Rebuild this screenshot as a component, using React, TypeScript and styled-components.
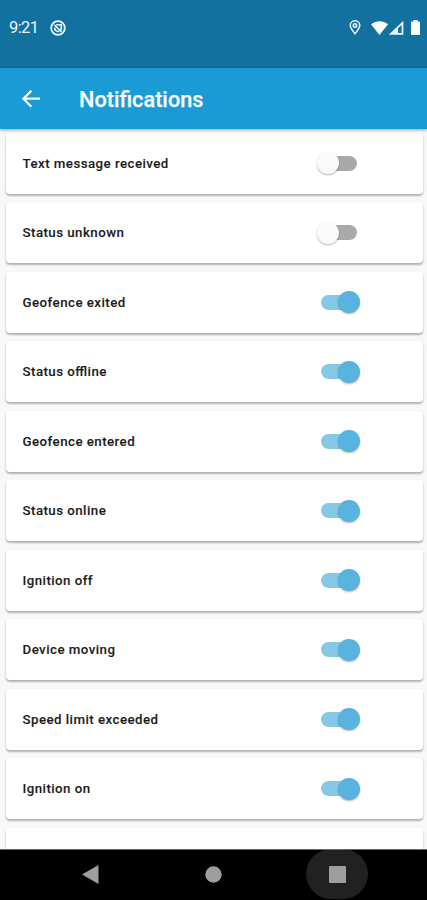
import React, { useState } from "react";
import styled, { createGlobalStyle } from "styled-components";

const GlobalStyle = createGlobalStyle`
  * { box-sizing: border-box; }
  html, body { margin: 0; padding: 0; background: #fafafa; }
  body { font-family: Roboto, "Liberation Sans", sans-serif; overflow: hidden; }
`;

const Screen = styled.div`
  width: 427px;
  height: 900px;
  display: flex;
  flex-direction: column;
  overflow: hidden;
  background: #f8f8f8;
`;

const StatusBar = styled.header`
  flex: none;
  height: 68px;
  padding: 0 7.5px 13px 9px;
  display: flex;
  align-items: center;
  color: #eaf6fc;
  background: #12719f;
`;

const Clock = styled.span`
  width: 41px;
  padding-top: 1px;
  font-size: 16.5px;
  line-height: 20px;
  letter-spacing: -0.6px;
`;

const StatusIcons = styled.div`
  margin-left: auto;
  display: flex;
  align-items: center;
`;

const Glyph = styled.svg<{ $gap?: number }>`
  display: block;
  flex: none;
  margin-left: ${({ $gap = 0 }) => $gap}px;
`;

const AppBar = styled.div`
  position: relative;
  z-index: 1;
  flex: none;
  height: 60.5px;
  padding: 2px 0 0 19px;
  display: flex;
  align-items: center;
  background: #1a9bd6;
  box-shadow: 0 1px 3px rgba(0, 0, 0, 0.38);
`;

const BackButton = styled.button`
  width: 24px;
  height: 24px;
  padding: 0;
  border: 0;
  background: none;
  color: #f4fbff;
`;

const Title = styled.h1`
  margin: 0 0 0 36px;
  padding-top: 1px;
  font-size: 21.7px;
  font-weight: 500;
  line-height: 28px;
  color: #f4fbff;
  -webkit-text-stroke: 0.25px #f4fbff;
`;

const List = styled.main`
  flex: 1;
  min-height: 0;
  padding: 4px 4px 0 5.5px;
  display: flex;
  flex-direction: column;
  gap: 8.5px;
  overflow: hidden;
`;

const Card = styled.div`
  flex: none;
  height: 61px;
  padding: 0 63px 0 17px;
  display: flex;
  align-items: center;
  justify-content: space-between;
  border-radius: 4px;
  background: #fff;
  box-shadow: 0 2px 2px rgba(0, 0, 0, 0.24), 0 1px 3px rgba(0, 0, 0, 0.09);
`;

const Label = styled.span`
  padding-top: 1px;
  font-size: 13.3px;
  font-weight: 500;
  line-height: 20px;
  letter-spacing: 0.45px;
  font-feature-settings: "liga" 1;
  color: #1c1c1c;
  -webkit-text-stroke: 0.1px #1c1c1c;
`;

const Toggle = styled.button<{ $on: boolean }>`
  width: 43px;
  height: 24px;
  padding: 0;
  border: 0;
  background: none;
  display: flex;
  align-items: center;
  justify-content: ${({ $on }) => ($on ? "flex-end" : "flex-start")};
  position: relative;

  &::before {
    content: "";
    position: absolute;
    left: 3.5px;
    right: 3.5px;
    top: 4.5px;
    height: 15px;
    border-radius: 8px;
    background: ${({ $on }) => ($on ? "#86c9e7" : "#a9a9a9")};
  }
`;

const Thumb = styled.span<{ $on: boolean }>`
  position: relative;
  width: 22px;
  height: 22px;
  border-radius: 50%;
  background: ${({ $on }) => ($on ? "#58b4df" : "#fafafa")};
  box-shadow: 0 1px 2px rgba(0, 0, 0, 0.3);
`;

const NavBar = styled.nav`
  flex: none;
  height: 51.5px;
  display: flex;
  align-items: center;
  padding: 0 0 1px 59px;
  border-top: 1px solid #686868;
  background: #000;
  overflow: hidden;
`;

const NavButton = styled.button<{ $pressed?: boolean }>`
  flex: none;
  width: 62px;
  height: 50px;
  padding: 0;
  margin-right: 61.5px;
  border: 0;
  border-radius: 28px;
  display: flex;
  align-items: center;
  justify-content: center;
  background: ${({ $pressed }) => ($pressed ? "#212121" : "transparent")};
`;

const initial: [string, boolean][] = [
  ["Text message received", false],
  ["Status unknown", false],
  ["Geofence exited", true],
  ["Status offline", true],
  ["Geofence entered", true],
  ["Status online", true],
  ["Ignition off", true],
  ["Device moving", true],
  ["Speed limit exceeded", true],
  ["Ignition on", true],
];

export default function App() {
  const [items, setItems] = useState(initial);
  const flip = (name: string) =>
    setItems((prev) => prev.map(([n, on]) => [n, n === name ? !on : on] as [string, boolean]));

  return (
    <Screen>
      <GlobalStyle />
      <StatusBar>
        <Clock>9:21</Clock>
        <Glyph width="16" height="16" viewBox="0 0 16 16" fill="none" stroke="currentColor">
          <circle cx="8" cy="8" r="6.8" strokeWidth="1.8" />
          <path d="M4.3 4.8 11.5 12M4.9 7.6a3.2 3.2 0 0 0 4.3 3.7M6.2 4.7h5v5.5" strokeWidth="1.6" />
        </Glyph>
        <StatusIcons>
          <Glyph width="12" height="15" viewBox="0 0 12 15" fill="none" stroke="currentColor">
            <path d="M6 13.8C3.2 10.5 1.2 8 1.2 5.6a4.8 4.8 0 0 1 9.6 0C10.8 8 8.8 10.5 6 13.8Z" strokeWidth="1.5" />
            <circle cx="6" cy="5.5" r="1.7" strokeWidth="1.6" />
          </Glyph>
          <Glyph $gap={9.5} width="17" height="14" viewBox="0 0 17 14" fill="#fff">
            <path d="M0 3.3C5-.9 12-.9 17 3.3L8.5 14Z" />
          </Glyph>
          <Glyph $gap={1} width="15" height="14" viewBox="0 0 15 14">
            <path d="M13.5 1.8v11H2Z" fill="none" stroke="#eaf6fc" strokeWidth="1.7" />
            <path d="M9 5.5V13H2Z" fill="#eaf6fc" />
          </Glyph>
          <Glyph $gap={7} width="9" height="15" viewBox="0 0 9 15" fill="#fff">
            <path d="M2.5 0h4v1.5H8a1 1 0 0 1 1 1V14a1 1 0 0 1-1 1H1a1 1 0 0 1-1-1V2.5a1 1 0 0 1 1-1h1.5Z" />
          </Glyph>
        </StatusIcons>
      </StatusBar>
      <AppBar>
        <BackButton aria-label="Back">
          <Glyph width="24" height="24" viewBox="0 0 24 24" fill="none" stroke="currentColor" strokeWidth="2.3">
            <path d="M21 11.7H4.8M12.4 3.7 4.4 11.7l8 8" />
          </Glyph>
        </BackButton>
        <Title>Notifications</Title>
      </AppBar>
      <List>
        {items.map(([name, on]) => (
          <Card key={name}>
            <Label>{name}</Label>
            <Toggle $on={on} role="switch" aria-checked={on} aria-label={name} onClick={() => flip(name)}>
              <Thumb $on={on} />
            </Toggle>
          </Card>
        ))}
        <Card />
      </List>
      <NavBar>
        <NavButton aria-label="Back">
          <Glyph width="17" height="19" viewBox="0 0 17 19" fill="#9e9e9e">
            <path d="M16.5 0v19L0 9.5Z" />
          </Glyph>
        </NavButton>
        <NavButton aria-label="Home">
          <Glyph width="17" height="17" viewBox="0 0 17 17" fill="#9e9e9e">
            <circle cx="8.5" cy="8.5" r="8.2" />
          </Glyph>
        </NavButton>
        <NavButton $pressed aria-label="Overview">
          <Glyph width="17" height="17" viewBox="0 0 17 17" fill="#9e9e9e">
            <rect width="17" height="17" rx="1" />
          </Glyph>
        </NavButton>
      </NavBar>
    </Screen>
  );
}
